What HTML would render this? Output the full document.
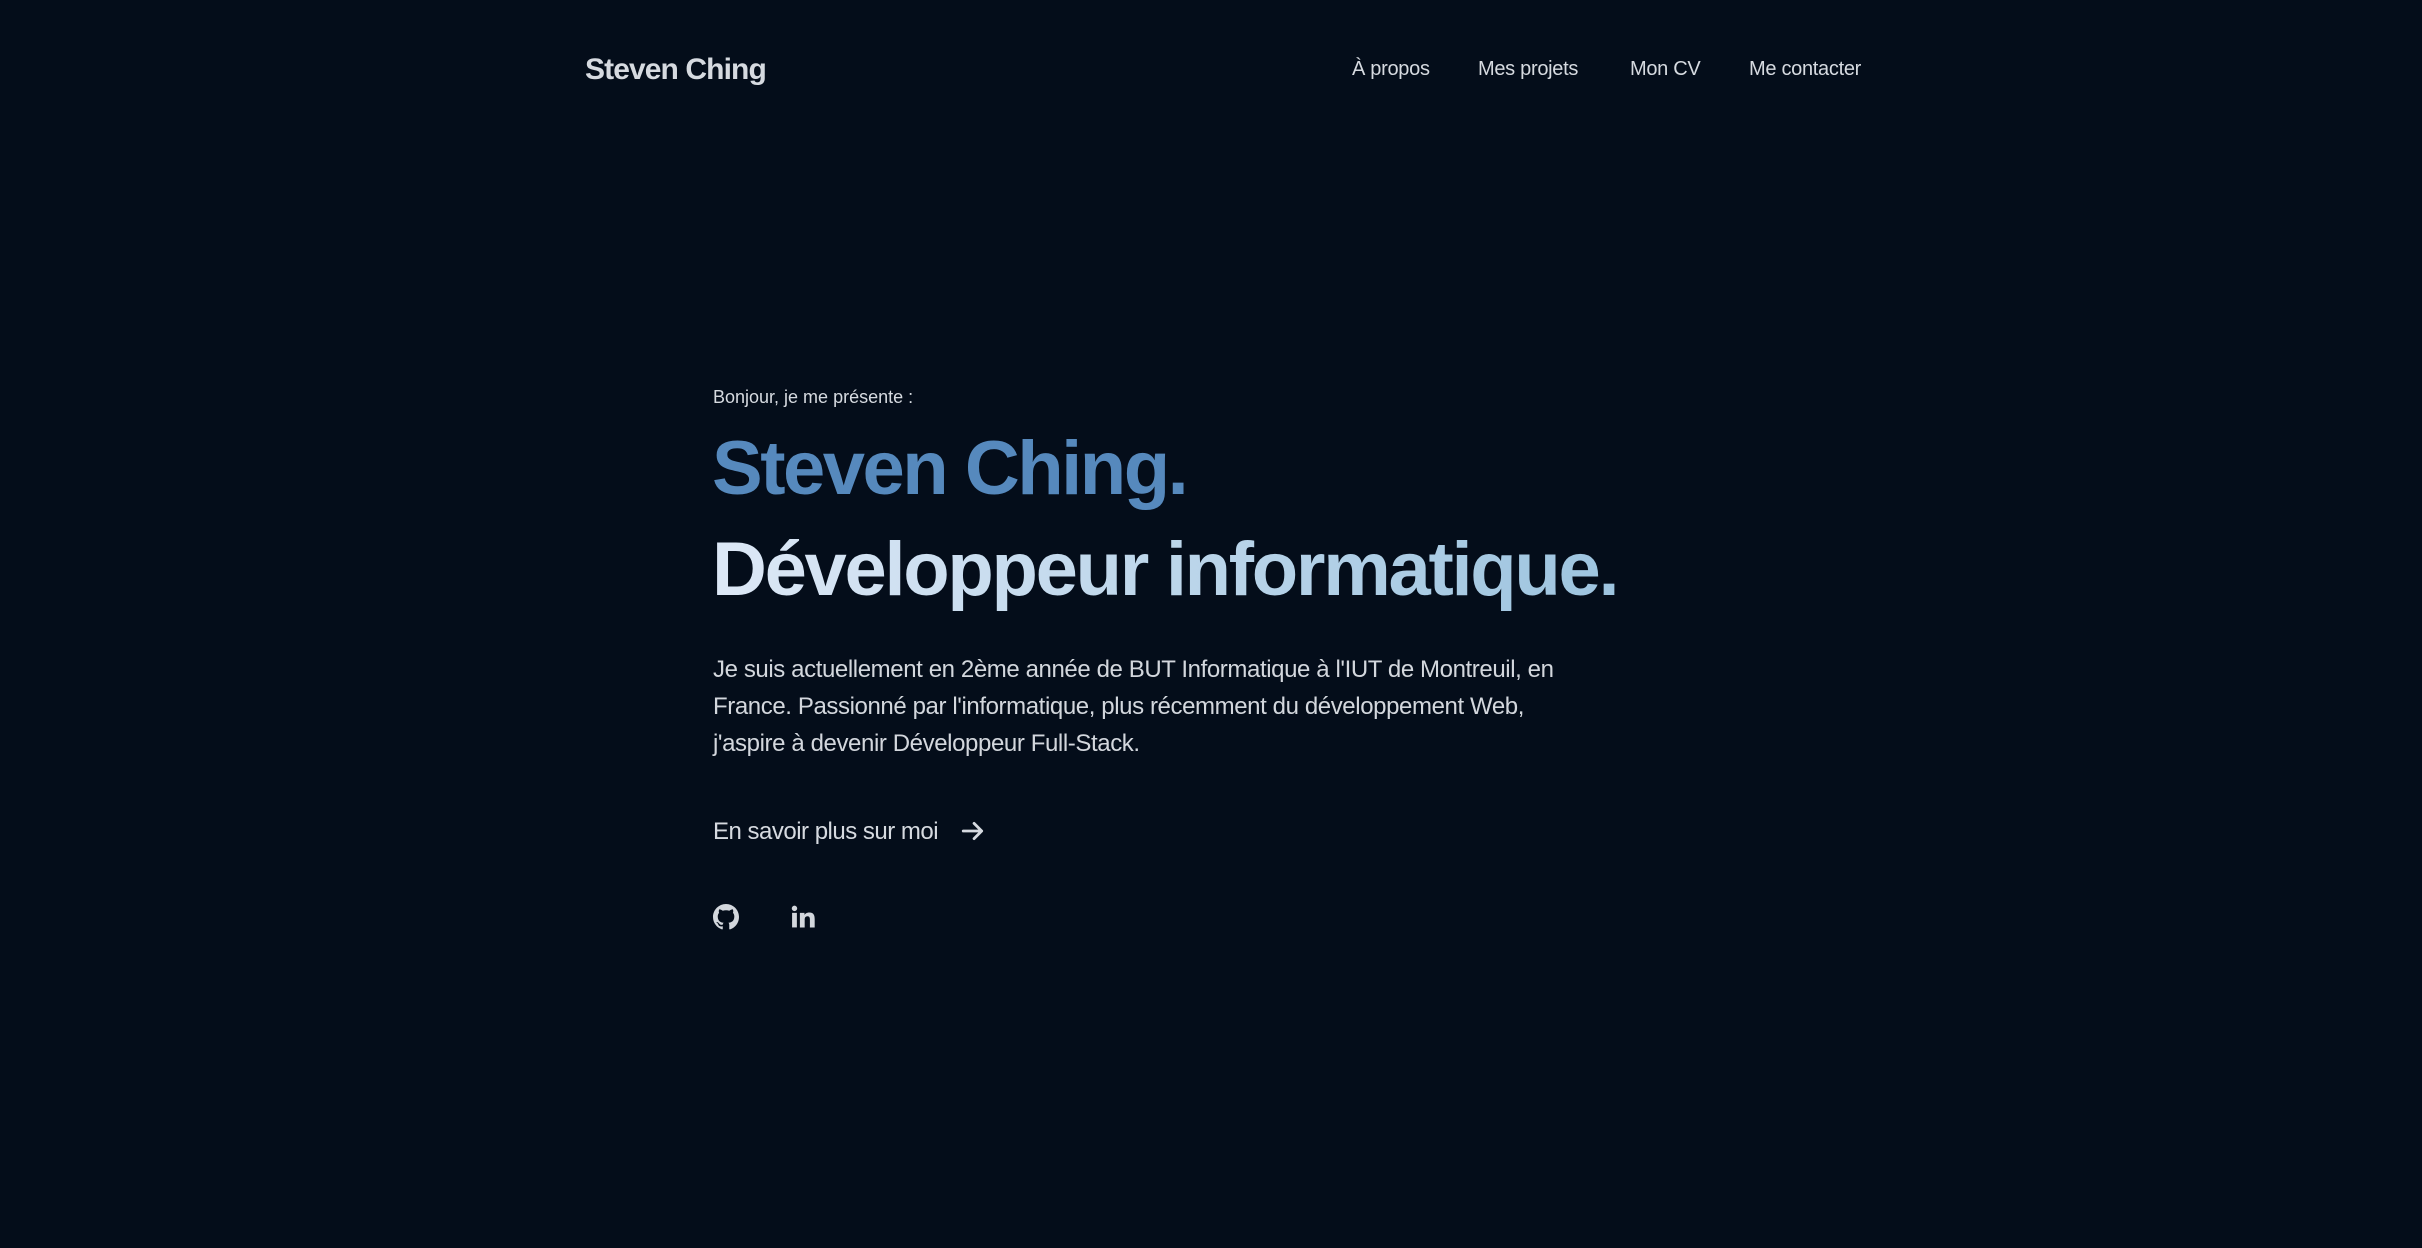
<!DOCTYPE html>
<html><head><meta charset="utf-8"><style>
html,body{margin:0;padding:0;background:#040d1a;width:2422px;height:1248px;overflow:hidden;font-family:"Liberation Sans",sans-serif;color:#d3d7dd}
.abs{position:absolute;white-space:nowrap}
.logo{left:585px;top:53px;font-size:30px;font-weight:bold;letter-spacing:-0.9px;color:#d6dae0}
.nav{top:58px;font-size:20px;letter-spacing:-0.3px;color:#d6dae0}
.hello{left:713px;top:387px;font-size:18px;letter-spacing:0px;color:#d6dae0}
h1{margin:0;position:absolute;left:712px;top:424px;font-size:76px;font-weight:bold;letter-spacing:-2.5px;color:#5689bd;white-space:nowrap;line-height:90px}
h2{margin:0;position:absolute;left:712px;top:525px;font-size:76px;font-weight:bold;letter-spacing:-2.3px;white-space:nowrap;line-height:90px;background:linear-gradient(90deg,#dde8f6,#9dc4df);-webkit-background-clip:text;background-clip:text;color:transparent}
.p{left:713px;top:651px;font-size:24px;line-height:37px;letter-spacing:-0.4px;color:#d3d7dd}
.more{left:713px;top:818px;font-size:24px;letter-spacing:-0.5px;color:#d6dae0}
</style></head><body>
<div class="abs logo">Steven Ching</div>
<div class="abs nav" style="left:1352px">À propos</div>
<div class="abs nav" style="left:1478px">Mes projets</div>
<div class="abs nav" style="left:1630px">Mon CV</div>
<div class="abs nav" style="left:1749px">Me contacter</div>
<div class="abs hello">Bonjour, je me présente :</div>
<h1>Steven Ching.</h1>
<h2>Développeur informatique.</h2>
<div class="abs p">Je suis actuellement en 2ème année de BUT Informatique à l'IUT de Montreuil, en<br>France. Passionné par l'informatique, plus récemment du développement Web,<br>j'aspire à devenir Développeur Full-Stack.</div>
<div class="abs more">En savoir plus sur moi</div>
<svg class="abs" style="left:960px;top:818px" width="26" height="26" viewBox="0 0 24 24" fill="none" stroke="#d6dae0" stroke-width="2.6" stroke-linecap="round" stroke-linejoin="round"><path d="M3 12h17M13 5l7 7-7 7"/></svg>
<svg class="abs" style="left:713px;top:904px" width="26" height="26" viewBox="0 0 16 16" fill="#d3d7dd"><path d="M8 0C3.58 0 0 3.58 0 8c0 3.54 2.29 6.53 5.47 7.59.4.07.55-.17.55-.38 0-.19-.01-.82-.01-1.49-2.01.37-2.53-.49-2.69-.94-.09-.23-.48-.94-.82-1.13-.28-.15-.68-.52-.01-.53.63-.01 1.08.58 1.23.82.72 1.21 1.87.87 2.33.66.07-.52.28-.87.51-1.07-1.78-.2-3.64-.89-3.64-3.95 0-.87.31-1.59.82-2.15-.08-.2-.36-1.02.08-2.12 0 0 .67-.21 2.2.82.64-.18 1.32-.27 2-.27.68 0 1.36.09 2 .27 1.53-1.04 2.2-.82 2.2-.82.44 1.1.16 1.92.08 2.12.51.56.82 1.27.82 2.15 0 3.07-1.87 3.75-3.65 3.95.29.25.54.73.54 1.48 0 1.07-.01 1.93-.01 2.2 0 .21.15.46.55.38A8.013 8.013 0 0016 8c0-4.42-3.58-8-8-8z"/></svg>
<svg class="abs" style="left:790px;top:904px" width="25" height="25" viewBox="0 0 24 24" fill="#d3d7dd"><rect x="2" y="8.5" width="4.6" height="14"/><circle cx="4.3" cy="4.2" r="2.6"/><path d="M9.5 8.5h4.4v2c.7-1.3 2.3-2.4 4.6-2.4 4.4 0 5.2 2.9 5.2 6.6v7.8h-4.6v-7c0-1.7 0-3.8-2.3-3.8s-2.7 1.8-2.7 3.7v7.1H9.5z"/></svg>
</body></html>
